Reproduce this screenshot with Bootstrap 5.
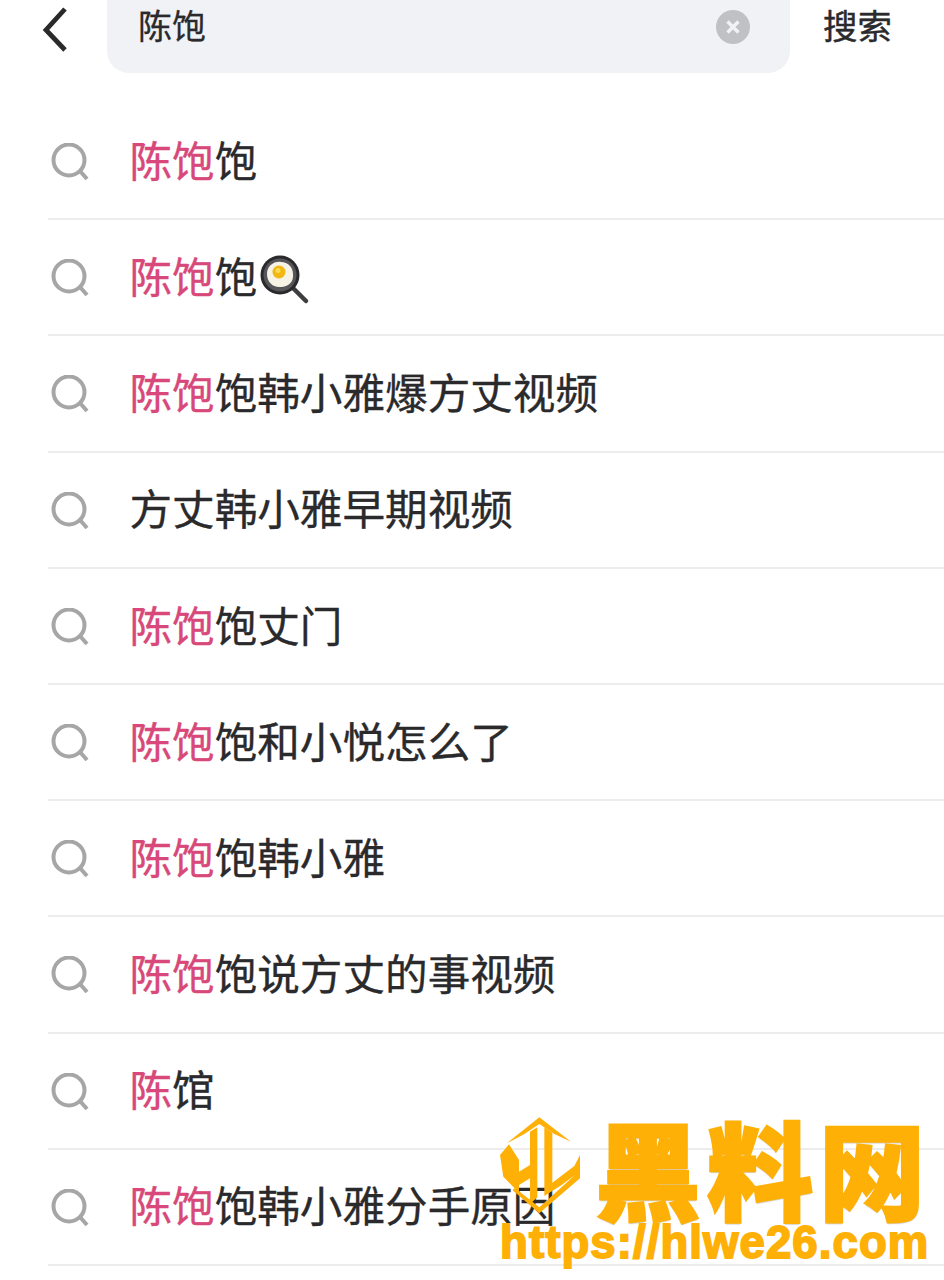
<!DOCTYPE html>
<html lang="zh">
<head>
<meta charset="utf-8">
<title>搜索</title>
<link rel="stylesheet" href="https://cdn.jsdelivr.net/npm/bootstrap@5.3.0/dist/css/bootstrap.min.css">
<style>
html,body{margin:0;background:#fff;overflow:hidden}
body{width:944px;height:1280px;position:relative;font-family:"Liberation Sans","Noto Sans CJK SC",sans-serif;color:#2a2a2c}
.topbar{height:104px}
.backcell{width:107px;padding-left:42px}
.searchbox{width:683px;height:73px;background:#f1f2f6;border-radius:0 0 22px 22px;padding:0 40px 20px 31px;font-size:34px;line-height:54px;-webkit-text-stroke:.3px #2a2a2c}
.searchact{width:154px;padding-left:33px;font-size:34.4px;line-height:54px;padding-bottom:18px;-webkit-text-stroke:.4px #2a2a2c}
.sugrow{height:116.2px;margin-left:48px;border-bottom:2px solid #ececec;font-size:42.6px;line-height:1;white-space:nowrap;-webkit-text-stroke:.35px currentColor}
.sugicon{width:81.5px;flex:none;padding:2px 0 0 3px}
.sugtext{padding-top:2px}
.hit{color:#d8487a}
.wm{position:absolute;left:498px;top:1114px;width:446px;height:166px;color:#ffb007}
.wmbig{position:absolute;left:97px;top:-1px;font-family:"Noto Sans CJK SC",sans-serif;font-weight:900;font-size:106px;line-height:106px;letter-spacing:6px;white-space:nowrap;-webkit-text-stroke:2.5px #ffb007;text-shadow:0 2px 1px rgba(120,110,90,.35)}
.wmurl{position:absolute;left:2px;top:107px;font-family:"Liberation Sans",sans-serif;font-weight:700;font-size:45.5px;line-height:44px;letter-spacing:1.1px;white-space:nowrap;-webkit-text-stroke:1.8px #ffb007}
</style>
</head>
<body>
<div class="topbar d-flex align-items-start">
  <div class="backcell">
    <svg width="30" height="48" viewBox="0 0 30 48" class="d-block" style="margin-top:5px"><path d="M23 4 4 25l19 20" fill="none" stroke="#2a2a2c" stroke-width="4.8"/></svg>
  </div>
  <div class="searchbox d-flex justify-content-between align-items-center">
    <span>陈饱</span>
    <svg width="34" height="34" viewBox="0 0 34 34"><circle cx="17" cy="17" r="17" fill="#bfc1c4"/><path d="M11.5 11.5l11 11M22.5 11.5l-11 11" stroke="#f1f2f6" stroke-width="3.4"/></svg>
  </div>
  <div class="searchact">搜索</div>
</div>

<div class="sugrow d-flex align-items-center"><span class="sugicon"><svg width="38" height="38" viewBox="0 0 38 38" class="d-block"><circle cx="18" cy="17" r="15.5" fill="none" stroke="#a6a6a6" stroke-width="4"/><path d="M29 28l7 8" stroke="#a6a6a6" stroke-width="4"/></svg></span><span class="sugtext"><span class="hit">陈饱</span>饱</span></div>
<div class="sugrow d-flex align-items-center"><span class="sugicon"><svg width="38" height="38" viewBox="0 0 38 38" class="d-block"><circle cx="18" cy="17" r="15.5" fill="none" stroke="#a6a6a6" stroke-width="4"/><path d="M29 28l7 8" stroke="#a6a6a6" stroke-width="4"/></svg></span><span class="sugtext"><span class="hit">陈饱</span>饱</span>
  <svg width="50" height="50" viewBox="0 0 50 50" class="d-block" style="margin:6px 0 0 3px"><path d="M34 34l12 12" stroke="#3e3e40" stroke-width="4.5" stroke-linecap="round"/><circle cx="20" cy="20" r="19.5" fill="#2a2a2c"/><circle cx="20" cy="20" r="16.5" fill="#55555a"/><path d="M7 19c0-8 7-13 14-12 7 0 12 5 12 12 1 8-5 13-12 13-8 1-14-5-14-13z" fill="#f6f2e6"/><circle cx="19" cy="17" r="6.5" fill="#f2b711"/><circle cx="18" cy="15.5" r="2.5" fill="#fbdc50"/></svg>
</div>
<div class="sugrow d-flex align-items-center"><span class="sugicon"><svg width="38" height="38" viewBox="0 0 38 38" class="d-block"><circle cx="18" cy="17" r="15.5" fill="none" stroke="#a6a6a6" stroke-width="4"/><path d="M29 28l7 8" stroke="#a6a6a6" stroke-width="4"/></svg></span><span class="sugtext"><span class="hit">陈饱</span>饱韩小雅爆方丈视频</span></div>
<div class="sugrow d-flex align-items-center"><span class="sugicon"><svg width="38" height="38" viewBox="0 0 38 38" class="d-block"><circle cx="18" cy="17" r="15.5" fill="none" stroke="#a6a6a6" stroke-width="4"/><path d="M29 28l7 8" stroke="#a6a6a6" stroke-width="4"/></svg></span><span class="sugtext">方丈韩小雅早期视频</span></div>
<div class="sugrow d-flex align-items-center"><span class="sugicon"><svg width="38" height="38" viewBox="0 0 38 38" class="d-block"><circle cx="18" cy="17" r="15.5" fill="none" stroke="#a6a6a6" stroke-width="4"/><path d="M29 28l7 8" stroke="#a6a6a6" stroke-width="4"/></svg></span><span class="sugtext"><span class="hit">陈饱</span>饱丈门</span></div>
<div class="sugrow d-flex align-items-center"><span class="sugicon"><svg width="38" height="38" viewBox="0 0 38 38" class="d-block"><circle cx="18" cy="17" r="15.5" fill="none" stroke="#a6a6a6" stroke-width="4"/><path d="M29 28l7 8" stroke="#a6a6a6" stroke-width="4"/></svg></span><span class="sugtext"><span class="hit">陈饱</span>饱和小悦怎么了</span></div>
<div class="sugrow d-flex align-items-center"><span class="sugicon"><svg width="38" height="38" viewBox="0 0 38 38" class="d-block"><circle cx="18" cy="17" r="15.5" fill="none" stroke="#a6a6a6" stroke-width="4"/><path d="M29 28l7 8" stroke="#a6a6a6" stroke-width="4"/></svg></span><span class="sugtext"><span class="hit">陈饱</span>饱韩小雅</span></div>
<div class="sugrow d-flex align-items-center"><span class="sugicon"><svg width="38" height="38" viewBox="0 0 38 38" class="d-block"><circle cx="18" cy="17" r="15.5" fill="none" stroke="#a6a6a6" stroke-width="4"/><path d="M29 28l7 8" stroke="#a6a6a6" stroke-width="4"/></svg></span><span class="sugtext"><span class="hit">陈饱</span>饱说方丈的事视频</span></div>
<div class="sugrow d-flex align-items-center"><span class="sugicon"><svg width="38" height="38" viewBox="0 0 38 38" class="d-block"><circle cx="18" cy="17" r="15.5" fill="none" stroke="#a6a6a6" stroke-width="4"/><path d="M29 28l7 8" stroke="#a6a6a6" stroke-width="4"/></svg></span><span class="sugtext"><span class="hit">陈</span>馆</span></div>
<div class="sugrow d-flex align-items-center"><span class="sugicon"><svg width="38" height="38" viewBox="0 0 38 38" class="d-block"><circle cx="18" cy="17" r="15.5" fill="none" stroke="#a6a6a6" stroke-width="4"/><path d="M29 28l7 8" stroke="#a6a6a6" stroke-width="4"/></svg></span><span class="sugtext"><span class="hit">陈饱</span>饱韩小雅分手原因</span></div>

<div class="wm">
  <svg width="95" height="110" viewBox="0 0 285 330" class="position-absolute" style="left:-3px;top:-4px">
    <path d="M133 22 228 95 178 72 133 42 88 72 35 100Z" fill="#ffb007"/>
    <path d="M42 103 72 150V185L105 165V65L127 52V262L105 282V205L72 225V248L25 200 15 135Z" fill="#ffb007"/>
    <path d="M148 52 172 68V218L238 168 255 135V205L133 310 52 240 60 234 133 292 240 195 200 225 148 258Z" fill="#ffb007"/>
  </svg>
  <div class="wmbig">黑料网</div>
  <div class="wmurl">https://hlwe26.com</div>
</div>
</body>
</html>
